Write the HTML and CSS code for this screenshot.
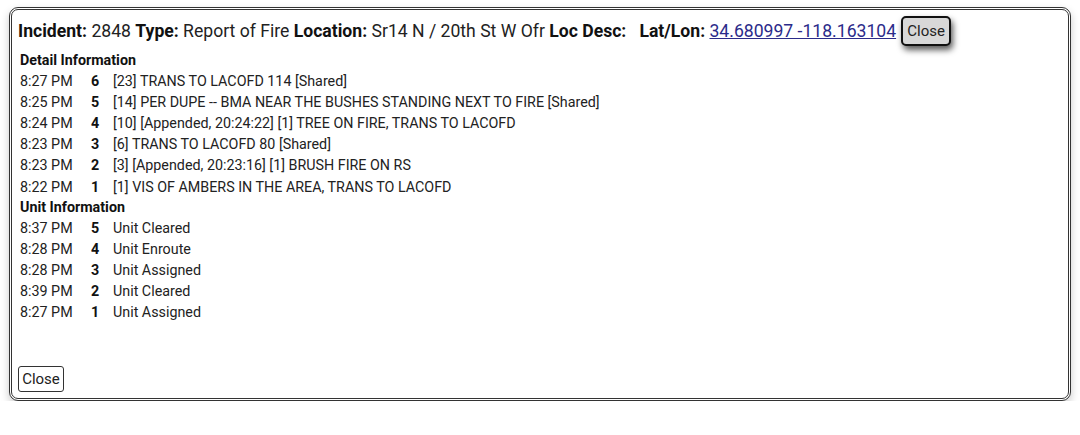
FILE: index.html
```html
<!DOCTYPE html>
<html>
<head>
<meta charset="utf-8">
<link rel="stylesheet" href="styles.css">
</head>
<body>
<div class="dialog">
  <div class="header">
    <span class="hdr-text"><b>Incident:</b> 2848 <b>Type:</b> Report of Fire <b>Location:</b> Sr14 N / 20th St W Ofr <b>Loc Desc:</b>&nbsp;&nbsp; <b>Lat/Lon:</b> <a href="#">34.680997 -118.163104</a></span>
    <button class="btn-top">Close</button>
  </div>
  <div class="section-title">Detail Information</div>
  <div class="rows">
    <span>8:27 PM</span><b>6</b><span>[23] TRANS TO LACOFD 114 [Shared]</span>
    <span>8:25 PM</span><b>5</b><span>[14] PER DUPE -- BMA NEAR THE BUSHES STANDING NEXT TO FIRE [Shared]</span>
    <span>8:24 PM</span><b>4</b><span>[10] [Appended, 20:24:22] [1] TREE ON FIRE, TRANS TO LACOFD</span>
    <span>8:23 PM</span><b>3</b><span>[6] TRANS TO LACOFD 80 [Shared]</span>
    <span>8:23 PM</span><b>2</b><span>[3] [Appended, 20:23:16] [1] BRUSH FIRE ON RS</span>
    <span>8:22 PM</span><b>1</b><span>[1] VIS OF AMBERS IN THE AREA, TRANS TO LACOFD</span>
  </div>
  <div class="section-title">Unit Information</div>
  <div class="rows">
    <span>8:37 PM</span><b>5</b><span>Unit Cleared</span>
    <span>8:28 PM</span><b>4</b><span>Unit Enroute</span>
    <span>8:28 PM</span><b>3</b><span>Unit Assigned</span>
    <span>8:39 PM</span><b>2</b><span>Unit Cleared</span>
    <span>8:27 PM</span><b>1</b><span>Unit Assigned</span>
  </div>
  <div class="footer"><button class="btn-bottom">Close</button></div>
</div>
</body>
</html>
```
FILE: styles.css
```css
html, body { margin: 0; padding: 0; background: #fff; }
body {
  font-family: Roboto, "Liberation Sans", sans-serif;
  color: #222;
  padding: 7px 9px 0 9px;
}
.dialog {
  box-sizing: border-box;
  width: 1062px;
  height: 394px;
  border: 3px double #333;
  border-radius: 9px;
  background: #fff;
  box-shadow: 0 4px 9px rgba(0,0,0,0.22);
  padding: 6px 6px 6px 6px;
  display: flex;
  flex-direction: column;
}
.header {
  display: flex;
  align-items: center;
  height: 30px;
  font-size: 17.6px;
  color: #222;
}
.header b { font-weight: 700; color: #111; }
.hdr-text { white-space: nowrap; }
.header a { color: #2b2b8a; text-decoration: underline; }
.btn-top {
  margin-left: 5px;
  height: 30px;
  width: 50px;
  padding: 0;
  font-family: Roboto, "Liberation Sans", sans-serif;
  font-size: 15px;
  color: #222;
  background: #d8d8d8;
  border: 2px solid #111;
  border-radius: 5px;
  box-shadow: 2px 4px 6px rgba(0,0,0,0.65);
}
.section-title {
  font-size: 14.3px;
  font-weight: 700;
  color: #111;
  height: 20px;
  line-height: 20px;
  padding-left: 2px;
}
.header + .section-title { margin-top: 4px; }
.rows {
  display: grid;
  grid-template-columns: 71px 22px 1fr;
  grid-auto-rows: 21.2px;
  align-items: center;
  font-size: 14.3px;
  padding-left: 2px;
}
.rows b { font-weight: 700; color: #111; }
.footer { margin-top: auto; }
.btn-bottom {
  height: 26px;
  width: 46px;
  padding: 0;
  font-family: Roboto, "Liberation Sans", sans-serif;
  font-size: 15px;
  color: #222;
  background: #fff;
  border: 1px solid #333;
  border-radius: 3px;
}
```
